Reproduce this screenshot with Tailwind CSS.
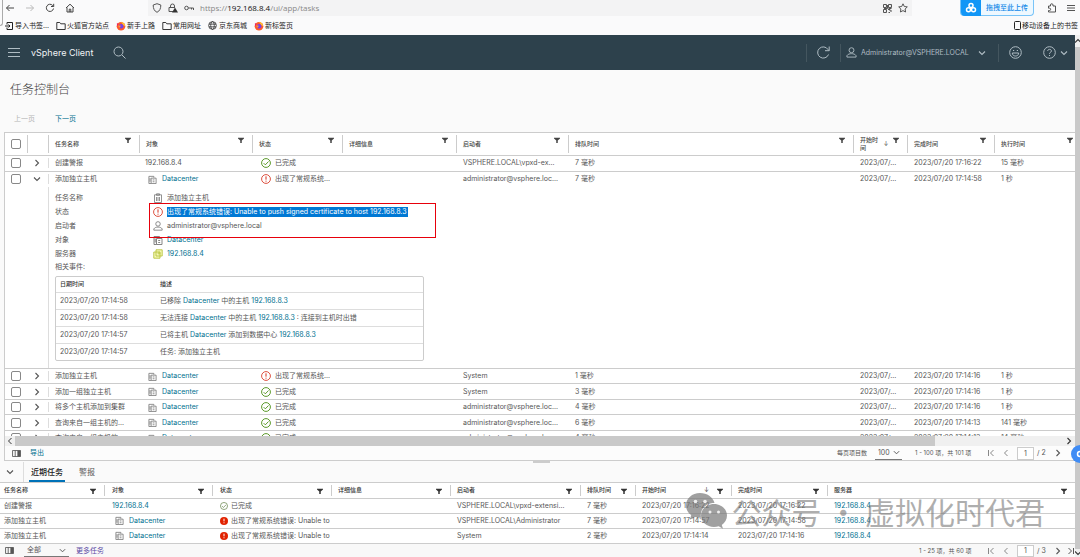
<!DOCTYPE html>
<html lang="zh-CN">
<head>
<meta charset="utf-8">
<title>vSphere Client</title>
<script src="https://cdn.jsdelivr.net/npm/@tailwindcss/browser@4"></script>
</head>
<body class="relative flex h-screen flex-col overflow-hidden bg-[#fafafa] font-[Inter,'Noto_Sans_CJK_SC',sans-serif] text-[7px] leading-[10px] text-[#565656]">

<svg class="hidden" fill="none" stroke="currentColor">
  <symbol id="filter" viewBox="0 0 8 8"><path d="M0 1h8v1L5 4.500V8H3V4.500L0 2z" fill="currentColor" stroke="none"/></symbol>
  <symbol id="right" viewBox="0 0 8 8"><path d="M2.500 1l3 3-3 3" fill="none" stroke="currentColor" stroke-width="1.100"/></symbol>
  <symbol id="left" viewBox="0 0 8 8"><path d="M5.500 1l-3 3 3 3" fill="none" stroke="currentColor" stroke-width="1"/></symbol>
  <symbol id="down" viewBox="0 0 8 8"><path d="M1 2.500l3 3 3-3" fill="none" stroke="currentColor" stroke-width="1.100"/></symbol>
  <symbol id="first" viewBox="0 0 8 8"><path d="M1.500 1v6M6.500 1l-3 3 3 3" fill="none" stroke="currentColor" stroke-width="1"/></symbol>
  <symbol id="last" viewBox="0 0 8 8"><path d="M6.500 1v6M1.500 1l3 3-3 3" fill="none" stroke="currentColor" stroke-width="1"/></symbol>
  <symbol id="dc" viewBox="0 0 10 10"><path d="M3.500 9.500H1v-8h5.500v1.500M3.500 9.500V3.500h5.500v6zM5.200 5.500h2M5.200 7.500h2M2.200 3.500v4" fill="none" stroke="currentColor" stroke-width="0.900"/></symbol>
  <symbol id="ok" viewBox="0 0 12 12"><circle cx="6" cy="6" r="5.300" fill="none" stroke="currentColor"/><path d="M3.200 6.200l2 2 3.800-4" fill="none" stroke="currentColor"/></symbol>
  <symbol id="err" viewBox="0 0 12 12"><circle cx="6" cy="6" r="5.300" fill="none" stroke="currentColor"/><path d="M6 2.800v4M6 8v1.200" fill="none" stroke="currentColor" stroke-width="1.200"/></symbol>
  <symbol id="errfill" viewBox="0 0 12 12"><circle cx="6" cy="6" r="6" fill="#e12200"/><path d="M6 2.500v4M6 8v1.400" stroke="#fff" stroke-width="1.500"/></symbol>
  <symbol id="user" viewBox="0 0 12 12"><circle cx="6" cy="3.500" r="2.700" fill="none" stroke="currentColor"/><path d="M1 11V9.500C2 7.800 4 7.300 6 7.300s4 .5 5 2.200V11z" fill="none" stroke="currentColor"/></symbol>
  <symbol id="task" viewBox="0 0 10 10"><path d="M1.500 1.800h7v7.700h-7zM3.500 .8h3v1.500h-3zM3.500 4v4M5 4v4M6.500 4v4" fill="none" stroke="currentColor" stroke-width="0.800"/></symbol>
  <symbol id="vc" viewBox="0 0 10 10"><path d="M3 .8h6.200V7H3zM.8 3H7v6.200H.8z" fill="#f5f7b8" stroke="#b9c43c" stroke-width="0.900"/><path d="M4.500 4.200h3M6 2.700v3" stroke="#b9c43c" stroke-width="0.700"/></symbol>
  <symbol id="cols" viewBox="0 0 10 8"><path d="M.5 .5h9v7h-9zM3.500 .5v7" fill="none" stroke="currentColor"/><path d="M6 .5h3.500v7H6z" fill="currentColor"/></symbol>
  <symbol id="folder" viewBox="0 0 10 10"><path d="M.8 8.500v-7h3l1 1.300h4.400v5.700z" fill="none" stroke="currentColor" stroke-width="0.900"/></symbol>
  <symbol id="fox" viewBox="0 0 10 10"><circle cx="5" cy="5.300" r="4.300" fill="#ff5a2c"/><path d="M5 .8c2 .2 4.200 2 4.200 4.500L7 4z" fill="#ffc22e"/><path d="M.9 2l1.600 1L1 5.500z" fill="#e5246c"/><circle cx="5.200" cy="5.200" r="2.200" fill="#7542e5"/><path d="M2 4.500l3 .3-1.500 2z" fill="#ffa02a"/></symbol>
</svg>

<!-- browser chrome -->
<div class="relative h-[35px] shrink-0 bg-[#fafafb] text-[#333]">
  <div class="absolute left-0 top-0 h-[26px] w-[3px] rounded-br border-b border-r border-[#aaa]"></div>
  <div class="flex h-4 items-center pl-[5px] pr-[5px]">
    <div class="flex w-[143px] gap-[10px] text-[#444]">
      <button aria-label="后退"><svg class="size-[10px]" viewBox="0 0 10 10" fill="none" stroke="currentColor"><path d="M9 5H1.500M4.500 2l-3 3 3 3"/></svg></button>
      <button aria-label="前进" class="text-[#bbb]"><svg class="size-[10px]" viewBox="0 0 10 10" fill="none" stroke="currentColor"><path d="M1 5h7.500M5.500 2l3 3-3 3"/></svg></button>
      <button aria-label="刷新"><svg class="size-[10px]" viewBox="0 0 10 10" fill="none" stroke="currentColor"><path d="M8.500 5.500A3.600 3.600 0 1 1 7.500 2.300L8.500 3.300M8.700 .8v2.700H6"/></svg></button>
      <button aria-label="主页"><svg class="size-[10px]" viewBox="0 0 10 10" fill="none" stroke="currentColor"><path d="M1 5l4-3.800L9 5M2 4.500V9h6V4.500M4.200 9V6.200h1.600V9"/></svg></button>
    </div>
    <div class="flex h-4 max-w-[764px] flex-1 items-center gap-[6px] bg-[#f3f3f4] pl-1 pr-1 text-[#555]">
      <svg class="size-[10px]" viewBox="0 0 10 10" fill="none" stroke="currentColor"><path d="M5 .7L8.800 2c0 3.500-1 6-3.800 7.300C2.200 8 1.200 5.500 1.200 2z"/></svg>
      <svg class="size-[10px]" viewBox="0 0 10 10" fill="none" stroke="currentColor"><path d="M2.500 4.500V3a2 2 0 0 1 4 0v1.500M5 8.500H1v-4h6"/><path d="M7 4.500L10 9.500H4z" fill="#333" stroke="none"/></svg>
      <svg class="size-[10px]" viewBox="0 0 10 10" fill="none" stroke="currentColor"><circle cx="2.500" cy="5" r="1.800"/><path d="M4.300 5h5.200v2M7.500 5v1.500"/></svg>
      <div class="flex-1 font-['Open_Sans',sans-serif] text-[8px] text-[#888]">https://<span class="text-[#111]">192.168.8.4</span>/ui/app/tasks</div>
      <svg class="size-[9px]" viewBox="0 0 9 9" fill="none" stroke="currentColor"><path d="M.5 .5h3v3h-3zM5.500 .5h3v3h-3zM.5 5.500h3v3h-3zM5 5.500h2v1.500h2M5.500 8.500H7M2 2h.2M7 2h.2M2 7h.2M4.500 1v3.500H1M8.500 4.500h-3"/></svg>
      <svg class="size-[10px]" viewBox="0 0 10 10" fill="none" stroke="currentColor"><path d="M5 .8l1.300 2.700 3 .4-2.200 2.100.5 3L5 7.600 2.400 9l.5-3L.7 3.900l3-.4z"/></svg>
    </div>
    <div class="ml-auto flex items-center">
      <button class="mr-[13px] flex h-4 items-center rounded-b border border-t-0 border-[#79c4f8] bg-[#eef8ff] font-medium text-[#1188e8]">
        <span class="flex h-4 w-[20px] items-center justify-center rounded-bl bg-[#1296f6]"><svg class="size-3" viewBox="0 0 12 12" fill="none" stroke="#fff" stroke-width="1.500"><circle cx="6" cy="3.500" r="2"/><circle cx="3.500" cy="7.800" r="2"/><circle cx="8.500" cy="7.800" r="2"/></svg></span>
        <span class="px-[5px]">拖拽至此上传</span>
      </button>
      <svg class="mr-[10px] size-[10px] text-[#555]" viewBox="0 0 10 10" fill="none" stroke="currentColor"><path d="M1.500 3h2V2a1.200 1.200 0 0 1 2.500 0v1h2.500v6h-7V7.500h1a1 1 0 0 0 0-2.300h-1z"/></svg>
      <svg class="size-2 text-[#555]" viewBox="0 0 8 8" stroke="currentColor"><path d="M0 1.500h8M0 4h8M0 6.500h8"/></svg>
    </div>
  </div>
  <nav class="flex h-[19px] items-center gap-[7px] pl-[5px] pr-[2px] text-[#222]">
    <a href="#" class="flex items-center gap-[2px]"><svg class="size-2" viewBox="0 0 8 8" fill="none" stroke="currentColor"><path d="M2 2.500V.5h5.500v7H2v-2M0 4h5M3.500 2.500L5 4 3.500 5.500"/></svg>导入书签...</a>
    <a href="#" class="flex items-center gap-px"><svg class="size-[10px]"><use href="#folder"/></svg>火狐官方站点</a>
    <a href="#" class="flex items-center gap-px"><svg class="size-[10px]"><use href="#fox"/></svg>新手上路</a>
    <a href="#" class="flex items-center gap-px"><svg class="size-[10px]"><use href="#folder"/></svg>常用网址</a>
    <a href="#" class="flex items-center gap-[2px]"><svg class="size-[9px]" viewBox="0 0 10 10" fill="none" stroke="currentColor" stroke-width=".8"><circle cx="5" cy="5" r="4.300"/><ellipse cx="5" cy="5" rx="2" ry="4.300"/><path d="M1 3.500h8M1 6.500h8"/></svg>京东商城</a>
    <a href="#" class="flex items-center gap-px"><svg class="size-[10px]"><use href="#fox"/></svg>新标签页</a>
    <a href="#" class="ml-auto flex items-center gap-px"><svg class="h-[9px] w-[7px]" viewBox="0 0 7 9" fill="none" stroke="currentColor"><rect x=".5" y=".5" width="6" height="8" rx="1"/></svg>移动设备上的书签</a>
  </nav>
</div>

<div class="flex min-h-0 flex-1">
<div class="flex min-w-0 flex-1 flex-col">

<header class="flex h-[35px] shrink-0 items-center bg-[#2d414c] pl-2 pr-[7px] text-[#b0bdc4]">
  <button aria-label="菜单"><svg class="h-[9px] w-3" viewBox="0 0 12 9" stroke="currentColor"><path d="M0 .5h12M0 4.500h12M0 8.500h12"/></svg></button>
  <span class="ml-[11px] text-[9px] text-[#f0f3f5]">vSphere Client</span>
  <button aria-label="搜索" class="ml-5"><svg class="size-[13px]" viewBox="0 0 13 13" fill="none" stroke="currentColor"><circle cx="5.500" cy="5.500" r="4.500"/><path d="M9 9l3.500 3.500"/></svg></button>
  <div class="ml-auto flex h-[18px] items-center">
    <button aria-label="刷新" class="flex h-full items-center border-l border-[#44565f] px-[10px]"><svg class="size-[13px]" viewBox="0 0 13 13" fill="none" stroke="currentColor"><path d="M11.500 8.500A5.600 5.600 0 1 1 11 3.500L12 4.500M12.200 .5v4.200H8"/></svg></button>
    <button class="flex h-full items-center gap-1 border-l border-[#44565f] pl-[5px] pr-3"><svg class="size-[11px]"><use href="#user"/></svg><span class="min-w-[113px] text-left">Administrator@VSPHERE.LOCAL</span><svg class="size-2"><use href="#down"/></svg></button>
    <button aria-label="反馈" class="flex h-full items-center border-l border-[#44565f] pl-[10px]"><svg class="size-[13px]" viewBox="0 0 13 13" fill="none" stroke="currentColor"><circle cx="6.500" cy="6.500" r="5.800"/><path d="M3.300 7h6.400c0 4-6.400 4-6.400 0zM4 4.500h1.200M7.800 4.500H9"/></svg></button>
    <button aria-label="帮助" class="ml-[21px] flex items-center gap-1"><svg class="size-[13px]" viewBox="0 0 13 13" fill="none" stroke="currentColor"><circle cx="6.500" cy="6.500" r="5.800"/><path d="M4.700 5c0-2.200 3.700-2.200 3.700 0 0 1.500-1.900 1.200-1.900 2.800M6.500 9v1"/></svg><svg class="size-2"><use href="#down"/></svg></button>
  </div>
</header>

<main class="flex min-h-0 flex-1 flex-col">
  <h1 class="mt-3 pl-[10px] text-[12px] font-light leading-4 text-[#444]">任务控制台</h1>
  <div class="mt-4 mb-2 flex h-[10px] gap-5 pl-[14px]">
    <button disabled class="text-[#b5b5b5]">上一页</button>
    <button class="text-[#00708f]">下一页</button>
  </div>

  <section class="ml-1 flex min-h-0 flex-1 flex-col border-y border-l border-[#ccc] bg-white">
    <div class="min-h-0 flex-1 overflow-hidden">
    <table class="w-full table-fixed border-collapse text-left [&_td]:p-0 [&_th]:p-0">
      <colgroup><col class="w-[22px]"><col class="w-[21px]"><col class="w-[91px]"><col class="w-[113px]"><col class="w-[90px]"><col class="w-[114px]"><col class="w-[112px]"><col><col class="w-[54px]"><col class="w-[87px]"><col class="w-[81px]"></colgroup>
      <thead class="text-[6px] leading-[8px] text-[#444] [&_svg]:mt-[2px] [&_svg]:size-[6px] [&_svg]:shrink-0 [&_svg]:self-start [&_th]:font-medium">
        <tr class="h-[22px]">
          <th><input type="checkbox" aria-label="全选" class="ml-[6px] block size-[10px] appearance-none rounded-[2px] border border-[#888]"></th>
          <th><div class="h-[18px] border-l border-[#ccc]"></div></th>
          <th><div class="flex h-[18px] items-center justify-between border-l border-[#ccc] pl-[6px] pr-2">任务名称<svg><use href="#filter"/></svg></div></th>
          <th><div class="flex h-[18px] items-center justify-between border-l border-[#ccc] pl-[6px] pr-2">对象<svg><use href="#filter"/></svg></div></th>
          <th><div class="flex h-[18px] items-center justify-between border-l border-[#ccc] pl-[6px] pr-2">状态<svg><use href="#filter"/></svg></div></th>
          <th><div class="flex h-[18px] items-center justify-between border-l border-[#ccc] pl-[6px] pr-2">详细信息<svg><use href="#filter"/></svg></div></th>
          <th><div class="flex h-[18px] items-center justify-between border-l border-[#ccc] pl-[6px] pr-2">启动者<svg><use href="#filter"/></svg></div></th>
          <th><div class="flex h-[18px] items-center justify-between border-l border-[#ccc] pl-[6px] pr-2">排队时间<svg><use href="#filter"/></svg></div></th>
          <th><div class="flex h-[18px] items-center justify-between border-l border-[#ccc] pl-[6px] pr-2"><span class="w-[19px]">开始时间</span><span class="font-normal">↓</span><svg><use href="#filter"/></svg></div></th>
          <th><div class="flex h-[18px] items-center justify-between border-l border-[#ccc] pl-[6px] pr-2">完成时间<svg><use href="#filter"/></svg></div></th>
          <th><div class="flex h-[18px] items-center justify-between border-l border-[#ccc] pl-[6px] pr-[2px]">执行时间<svg><use href="#filter"/></svg></div></th>
        </tr>
      </thead>
      <tbody class="[&_a]:text-[#00708f] [&_input]:ml-[6px] [&_input]:block [&_input]:size-[10px] [&_input]:appearance-none [&_input]:rounded-[2px] [&_input]:border [&_input]:border-[#888]">
        <tr class="h-4 border-t border-[#ccc]">
          <td><input type="checkbox" aria-label="选择"></td>
          <td><button aria-label="展开" class="ml-[6px] block"><svg class="size-2"><use href="#right"/></svg></button></td>
          <td><div class="border-l border-[#ddd] pl-[6px]">创建警报</div></td>
          <td class="whitespace-nowrap"><div class="pl-[6px]">192.168.8.4</div></td>
          <td><div class="flex items-center gap-1 pl-[9px]"><svg class="size-[10px] text-[#3c8500]"><use href="#ok"/></svg>已完成</div></td>
          <td></td>
          <td><div class="whitespace-nowrap pl-[7px]">VSPHERE.LOCAL\vpxd-ex...</div></td>
          <td><div class="pl-[7px]">7 毫秒</div></td>
          <td><div class="whitespace-nowrap pl-[7px]">2023/07/...</div></td>
          <td><div class="whitespace-nowrap pl-[7px]">2023/07/20 17:16:22</div></td>
          <td><div class="pl-[7px]">15 毫秒</div></td>
        </tr>
        <tr class="h-4 border-t border-[#ccc]">
          <td><input type="checkbox" aria-label="选择"></td>
          <td><button aria-label="收起" class="ml-[6px] block"><svg class="size-2"><use href="#down"/></svg></button></td>
          <td><div class="border-l border-[#ddd] pl-[6px]">添加独立主机</div></td>
          <td><a href="#" class="flex items-center gap-[5px] pl-[9px]"><svg class="size-[9px] text-[#777]"><use href="#dc"/></svg>Datacenter</a></td>
          <td><div class="flex items-center gap-1 whitespace-nowrap pl-[9px]"><svg class="size-[10px] shrink-0 text-[#d6301c]"><use href="#err"/></svg>出现了常规系统...</div></td>
          <td></td>
          <td><div class="whitespace-nowrap pl-[7px]">administrator@vsphere.loc...</div></td>
          <td><div class="pl-[7px]">7 毫秒</div></td>
          <td><div class="whitespace-nowrap pl-[7px]">2023/07/...</div></td>
          <td><div class="whitespace-nowrap pl-[7px]">2023/07/20 17:14:58</div></td>
          <td><div class="pl-[7px]">1 秒</div></td>
        </tr>
        <tr>
          <td></td><td></td>
          <td colspan="9" class="align-top">
            <div class="relative h-[181px] border-l border-[#ddd] pl-[6px] pt-1">
              <dl class="grid grid-cols-[98px_1fr] leading-[14px] [&_dd]:flex [&_dd]:items-center [&_dd]:gap-1 [&_dd_svg]:size-[10px] [&_dd_svg]:text-[#777]">
                <dt>任务名称</dt><dd><svg><use href="#task"/></svg>添加独立主机</dd>
                <dt>状态</dt><dd><svg class="!text-[#d6301c]"><use href="#err"/></svg><span class="bg-[#0078d4] pr-px leading-[10px] text-white">出现了常规系统错误: Unable to push signed certificate to host 192.168.8.3</span></dd>
                <dt>启动者</dt><dd><svg><use href="#user"/></svg>administrator@vsphere.local</dd>
                <dt>对象</dt><dd><svg><use href="#dc"/></svg><a href="#">Datacenter</a></dd>
                <dt>服务器</dt><dd><svg><use href="#vc"/></svg><a href="#">192.168.8.4</a></dd>
                <dt class="leading-[12px]">相关事件:</dt>
              </dl>
              <div class="absolute left-[100px] top-[16px] h-[35px] w-[287px] border border-solid border-red-600"></div>
              <div class="mt-[3px] w-[369px] overflow-hidden rounded-[2px] border border-[#ccc]">
                <table class="w-full table-fixed border-collapse">
                  <colgroup><col class="w-[100px]"><col></colgroup>
                  <thead class="text-[6px] text-[#333] [&_th]:font-medium"><tr class="h-[15px]"><th><div class="pl-1">日期时间</div></th><th><div class="pl-1">描述</div></th></tr></thead>
                  <tbody class="[&_div]:pl-1 [&_tr]:h-[17px] [&_tr]:border-t [&_tr]:border-[#ddd]">
                    <tr><td><div>2023/07/20 17:14:58</div></td><td><div>已移除 <a href="#">Datacenter</a> 中的主机 <a href="#">192.168.8.3</a></div></td></tr>
                    <tr><td><div>2023/07/20 17:14:58</div></td><td><div>无法连接 <a href="#">Datacenter</a> 中的主机 <a href="#">192.168.8.3</a> : 连接到主机时出错</div></td></tr>
                    <tr><td><div>2023/07/20 17:14:57</div></td><td><div>已将主机 <a href="#">Datacenter</a> 添加到数据中心 <a href="#">192.168.8.3</a></div></td></tr>
                    <tr><td><div>2023/07/20 17:14:57</div></td><td><div>任务: 添加独立主机</div></td></tr>
                  </tbody>
                </table>
              </div>
            </div>
          </td>
        </tr>
        <tr class="h-[15px] border-t border-[#ccc]">
          <td><input type="checkbox" aria-label="选择"></td>
          <td><button aria-label="展开" class="ml-[6px] block"><svg class="size-2"><use href="#right"/></svg></button></td>
          <td><div class="border-l border-[#ddd] pl-[6px]">添加独立主机</div></td>
          <td><a href="#" class="flex items-center gap-[5px] pl-[9px]"><svg class="size-[9px] text-[#777]"><use href="#dc"/></svg>Datacenter</a></td>
          <td><div class="flex items-center gap-1 whitespace-nowrap pl-[9px]"><svg class="size-[10px] shrink-0 text-[#d6301c]"><use href="#err"/></svg>出现了常规系统...</div></td>
          <td></td>
          <td><div class="pl-[7px]">System</div></td>
          <td><div class="pl-[7px]">1 毫秒</div></td>
          <td><div class="whitespace-nowrap pl-[7px]">2023/07/...</div></td>
          <td><div class="whitespace-nowrap pl-[7px]">2023/07/20 17:14:16</div></td>
          <td><div class="pl-[7px]">1 秒</div></td>
        </tr>
        <tr class="h-4 border-t border-[#ccc]">
          <td><input type="checkbox" aria-label="选择"></td>
          <td><button aria-label="展开" class="ml-[6px] block"><svg class="size-2"><use href="#right"/></svg></button></td>
          <td><div class="border-l border-[#ddd] pl-[6px]">添加一组独立主机</div></td>
          <td><a href="#" class="flex items-center gap-[5px] pl-[9px]"><svg class="size-[9px] text-[#777]"><use href="#dc"/></svg>Datacenter</a></td>
          <td><div class="flex items-center gap-1 pl-[9px]"><svg class="size-[10px] text-[#3c8500]"><use href="#ok"/></svg>已完成</div></td>
          <td></td>
          <td><div class="pl-[7px]">System</div></td>
          <td><div class="pl-[7px]">3 毫秒</div></td>
          <td><div class="whitespace-nowrap pl-[7px]">2023/07/...</div></td>
          <td><div class="whitespace-nowrap pl-[7px]">2023/07/20 17:14:16</div></td>
          <td><div class="pl-[7px]">1 秒</div></td>
        </tr>
        <tr class="h-[15px] border-t border-[#ccc]">
          <td><input type="checkbox" aria-label="选择"></td>
          <td><button aria-label="展开" class="ml-[6px] block"><svg class="size-2"><use href="#right"/></svg></button></td>
          <td><div class="border-l border-[#ddd] pl-[6px]">将多个主机添加到集群</div></td>
          <td><a href="#" class="flex items-center gap-[5px] pl-[9px]"><svg class="size-[9px] text-[#777]"><use href="#dc"/></svg>Datacenter</a></td>
          <td><div class="flex items-center gap-1 pl-[9px]"><svg class="size-[10px] text-[#3c8500]"><use href="#ok"/></svg>已完成</div></td>
          <td></td>
          <td><div class="whitespace-nowrap pl-[7px]">administrator@vsphere.loc...</div></td>
          <td><div class="pl-[7px]">4 毫秒</div></td>
          <td><div class="whitespace-nowrap pl-[7px]">2023/07/...</div></td>
          <td><div class="whitespace-nowrap pl-[7px]">2023/07/20 17:14:16</div></td>
          <td><div class="pl-[7px]">1 秒</div></td>
        </tr>
        <tr class="h-4 border-t border-[#ccc]">
          <td><input type="checkbox" aria-label="选择"></td>
          <td><button aria-label="展开" class="ml-[6px] block"><svg class="size-2"><use href="#right"/></svg></button></td>
          <td><div class="border-l border-[#ddd] pl-[6px]">查询来自一组主机的...</div></td>
          <td><a href="#" class="flex items-center gap-[5px] pl-[9px]"><svg class="size-[9px] text-[#777]"><use href="#dc"/></svg>Datacenter</a></td>
          <td><div class="flex items-center gap-1 pl-[9px]"><svg class="size-[10px] text-[#3c8500]"><use href="#ok"/></svg>已完成</div></td>
          <td></td>
          <td><div class="whitespace-nowrap pl-[7px]">administrator@vsphere.loc...</div></td>
          <td><div class="pl-[7px]">6 毫秒</div></td>
          <td><div class="whitespace-nowrap pl-[7px]">2023/07/...</div></td>
          <td><div class="whitespace-nowrap pl-[7px]">2023/07/20 17:14:13</div></td>
          <td><div class="pl-[7px]">141 毫秒</div></td>
        </tr>
        <tr class="h-[15px] border-t border-[#ccc]">
          <td><input type="checkbox" aria-label="选择"></td>
          <td><button aria-label="展开" class="ml-[6px] block"><svg class="size-2"><use href="#right"/></svg></button></td>
          <td><div class="border-l border-[#ddd] pl-[6px]">查询来自一组主机的...</div></td>
          <td><a href="#" class="flex items-center gap-[5px] pl-[9px]"><svg class="size-[9px] text-[#777]"><use href="#dc"/></svg>Datacenter</a></td>
          <td><div class="flex items-center gap-1 pl-[9px]"><svg class="size-[10px] text-[#3c8500]"><use href="#ok"/></svg>已完成</div></td>
          <td></td>
          <td><div class="whitespace-nowrap pl-[7px]">administrator@vsphere.loc...</div></td>
          <td><div class="pl-[7px]">4 毫秒</div></td>
          <td><div class="whitespace-nowrap pl-[7px]">2023/07/...</div></td>
          <td><div class="whitespace-nowrap pl-[7px]">2023/07/20 17:14:13</div></td>
          <td><div class="pl-[7px]">14 毫秒</div></td>
        </tr>
      </tbody>
    </table>
    </div>
    <div class="flex h-[10px] shrink-0 items-center bg-[#f0f0f0] text-[#333]">
      <svg class="mx-px size-2"><use href="#left"/></svg>
      <div class="h-full flex-1 bg-[#c9c9c9]"></div>
      <svg class="ml-[130px] mr-[2px] size-2"><use href="#right"/></svg>
    </div>
    <div class="flex h-[14px] shrink-0 items-center bg-[#fcfcfc] pl-[7px] pr-[13px]">
      <button aria-label="列"><svg class="h-[7px] w-[9px]"><use href="#cols"/></svg></button>
      <button class="ml-[9px] text-[#00708f]">导出</button>
      <label for="size" class="ml-auto text-[6px]">每页项目数</label>
      <div class="relative ml-2 h-[14px] w-[27px] border-b border-[#777]">
        <select id="size" class="block h-[13px] w-full appearance-none pl-[3px]"><option>100</option></select>
        <svg class="pointer-events-none absolute right-[2px] top-[3px] size-[7px]"><use href="#down"/></svg>
      </div>
      <span class="ml-[13px] w-[72px] whitespace-nowrap text-[6px]">1 - 100 项，共 101 项</span>
      <button aria-label="首页" class="text-[#888]"><svg class="size-2"><use href="#first"/></svg></button>
      <button aria-label="上一页" class="ml-[7px] text-[#888]"><svg class="size-2"><use href="#left"/></svg></button>
      <input aria-label="页码" value="1" class="ml-[7px] h-[13px] w-[17px] border border-[#ccc] bg-white text-center">
      <span class="ml-[3px] w-[17px]">/ 2</span>
      <button aria-label="下一页"><svg class="size-2"><use href="#right"/></svg></button>
    </div>
  </section>
</main>

<!-- recent tasks panel -->
<section class="shrink-0">
  <div class="flex h-[22px] items-end border-b border-[#ccc] text-[8px]">
    <button aria-label="收起面板" class="flex h-5 w-6 items-center border-r border-[#ddd] pl-[6px]"><svg class="size-2"><use href="#down"/></svg></button>
    <button class="ml-[5px] h-[18px] border-b-2 border-[#0072b8] px-[2px] font-medium text-[#222]">近期任务</button>
    <button class="ml-[14px] h-[18px] border-b-2 border-transparent">警报</button>
    <div class="ml-auto mr-[525px] h-[2px] w-[17px] self-start bg-[#ccc]"></div>
  </div>
  <table class="w-full table-fixed border-collapse bg-white text-left [&_td]:p-0 [&_th]:p-0">
    <colgroup><col class="w-[104px]"><col class="w-[108px]"><col class="w-[119px]"><col class="w-[119px]"><col class="w-[130px]"><col class="w-[55px]"><col class="w-[96px]"><col class="w-[96px]"><col></colgroup>
    <thead class="text-[6px] text-[#333] [&_svg]:mt-[2px] [&_svg]:size-[6px] [&_svg]:shrink-0 [&_th]:font-medium">
      <tr class="h-[15px]">
        <th><div class="flex h-[11px] items-center justify-between pl-1 pr-2">任务名称<svg><use href="#filter"/></svg></div></th>
        <th><div class="flex h-[11px] items-center justify-between border-l border-[#ccc] pl-[7px] pr-2">对象<svg><use href="#filter"/></svg></div></th>
        <th><div class="flex h-[11px] items-center justify-between border-l border-[#ccc] pl-[7px] pr-2">状态<svg><use href="#filter"/></svg></div></th>
        <th><div class="flex h-[11px] items-center justify-between border-l border-[#ccc] pl-[6px] pr-2">详细信息<svg><use href="#filter"/></svg></div></th>
        <th><div class="flex h-[11px] items-center justify-between border-l border-[#ccc] pl-[6px] pr-2">启动者<svg><use href="#filter"/></svg></div></th>
        <th><div class="flex h-[11px] items-center justify-between border-l border-[#ccc] pl-[6px] pr-2">排队时间<svg><use href="#filter"/></svg></div></th>
        <th><div class="flex h-[11px] items-center gap-2 border-l border-[#ccc] pl-[6px] pr-2"><span class="flex-1">开始时间</span><span class="font-normal">↓</span><svg><use href="#filter"/></svg></div></th>
        <th><div class="flex h-[11px] items-center justify-between border-l border-[#ccc] pl-[6px] pr-2">完成时间<svg><use href="#filter"/></svg></div></th>
        <th><div class="flex h-[11px] items-center justify-between border-l border-[#ccc] pl-[6px] pr-2">服务器<svg><use href="#filter"/></svg></div></th>
      </tr>
    </thead>
    <tbody class="whitespace-nowrap [&_a]:text-[#00708f] [&_tr]:h-[15px] [&_tr]:border-t [&_tr]:border-[#ccc]">
      <tr>
        <td><div class="pl-1">创建警报</div></td>
        <td><a href="#" class="pl-2">192.168.8.4</a></td>
        <td><div class="flex items-center gap-[3px] pl-2"><svg class="size-2 text-[#5a7a3c]"><use href="#ok"/></svg>已完成</div></td>
        <td></td>
        <td><div class="pl-[7px]">VSPHERE.LOCAL\vpxd-extensi...</div></td>
        <td><div class="pl-[7px]">7 毫秒</div></td><td><div class="pl-[7px]">2023/07/20 17:16:22</div></td><td><div class="pl-[7px]">2023/07/20 17:16:22</div></td><td><a href="#" class="pl-[7px]">192.168.8.4</a></td>
      </tr>
      <tr>
        <td><div class="pl-1">添加独立主机</div></td>
        <td><a href="#" class="flex items-center gap-[5px] pl-[11px]"><svg class="size-[9px] text-[#777]"><use href="#dc"/></svg>Datacenter</a></td>
        <td><div class="flex items-center gap-[3px] pl-2"><svg class="size-2 shrink-0"><use href="#errfill"/></svg>出现了常规系统错误: Unable to</div></td>
        <td></td>
        <td><div class="pl-[7px]">VSPHERE.LOCAL\Administrator</div></td>
        <td><div class="pl-[7px]">7 毫秒</div></td><td><div class="pl-[7px]">2023/07/20 17:14:57</div></td><td><div class="pl-[7px]">2023/07/20 17:14:58</div></td><td><a href="#" class="pl-[7px]">192.168.8.4</a></td>
      </tr>
      <tr>
        <td><div class="pl-1">添加独立主机</div></td>
        <td><a href="#" class="flex items-center gap-[5px] pl-[11px]"><svg class="size-[9px] text-[#777]"><use href="#dc"/></svg>Datacenter</a></td>
        <td><div class="flex items-center gap-[3px] pl-2"><svg class="size-2 shrink-0"><use href="#errfill"/></svg>出现了常规系统错误: Unable to</div></td>
        <td></td>
        <td><div class="pl-[7px]">System</div></td>
        <td><div class="pl-[7px]">2 毫秒</div></td><td><div class="pl-[7px]">2023/07/20 17:14:14</div></td><td><div class="pl-[7px]">2023/07/20 17:14:16</div></td><td><a href="#" class="pl-[7px]">192.168.8.4</a></td>
      </tr>
    </tbody>
  </table>
  <div class="flex h-[14px] items-center border-t border-[#ccc] bg-[#f8f8f8] pl-[5px] pr-0">
    <button aria-label="列"><svg class="h-[7px] w-[9px]"><use href="#cols"/></svg></button>
    <div class="relative ml-[10px] w-[45px] border-b border-[#777]">
      <select aria-label="筛选任务" class="block h-[11px] w-full appearance-none pl-[3px]"><option>全部</option></select>
      <svg class="pointer-events-none absolute right-[3px] top-[2px] size-[7px]"><use href="#down"/></svg>
    </div>
    <a href="#" class="ml-[7px] text-[#5b4ba5]">更多任务</a>
    <span class="ml-auto w-[68px] whitespace-nowrap text-[6px]">1 - 25 项，共 60 项</span>
    <button aria-label="首页" class="text-[#888]"><svg class="size-2"><use href="#first"/></svg></button>
    <button aria-label="上一页" class="ml-[7px] text-[#888]"><svg class="size-2"><use href="#left"/></svg></button>
    <input aria-label="页码" value="1" class="ml-[7px] h-[12px] w-[17px] border border-[#ccc] bg-white text-center">
    <span class="ml-[3px] w-[17px]">/ 3</span>
    <button aria-label="下一页"><svg class="size-2"><use href="#right"/></svg></button>
    <button aria-label="末页" class="ml-[5px]"><svg class="size-2"><use href="#last"/></svg></button>
  </div>
</section>
</div>

<!-- page scrollbar -->
<div class="flex w-[5px] shrink-0 flex-col items-center overflow-hidden bg-[#f0f0f0] text-[#333]">
  <svg class="my-[2px] size-2 shrink-0 rotate-180"><use href="#down"/></svg>
  <div class="w-full flex-1 bg-[#c9c9c9]"></div>
  <svg class="size-2 shrink-0"><use href="#down"/></svg>
</div>
</div>

<!-- floating assistant button -->
<button aria-label="助手" class="absolute bottom-[94px] right-[-9px] flex size-[18px] items-center rounded-full bg-[#3f8cf5] pl-[5px]"><svg class="size-2" viewBox="0 0 8 8" fill="none" stroke="#fff" stroke-width="1.500"><circle cx="4" cy="4" r="2.500"/></svg></button>

<!-- watermark -->
<div class="pointer-events-none absolute bottom-[25px] right-[35px] flex items-center gap-1 whitespace-nowrap font-['Noto_Sans_CJK_SC',sans-serif] text-[30px] leading-[42px] text-[#777]/60">
  <svg class="h-[38px] w-[43px]" viewBox="0 0 43 38"><path d="M15 1C7 1 1 6.500 1 13.500c0 4 2 7.300 5.200 9.600L5 27.500l5-2.600c2 .6 4 .9 6 .8C14.500 17 21 11 29.500 11 28 5 22 1 15 1z" fill="#777" fill-opacity=".7"/><path d="M29 12c-7 0-13 5-13 11.500S22 35 29 35c1.700 0 3.200-.3 4.700-.7l4.300 2.400-1.200-3.800c3.300-2.200 5.200-5.500 5.200-9.400C42 17 36 12 29 12z" fill="#777" fill-opacity=".7"/><g fill="#eee"><circle cx="10.500" cy="9.500" r="1.800"/><circle cx="20" cy="9.500" r="1.800"/><circle cx="25" cy="20" r="1.500"/><circle cx="33.500" cy="20" r="1.500"/></g></svg>
  <span>公众号 · 虚拟化时代君</span>
</div>
</body>
</html>
